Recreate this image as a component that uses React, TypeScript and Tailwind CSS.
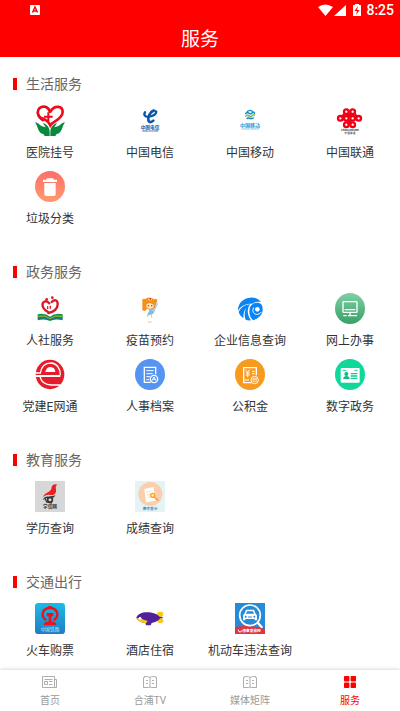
import type { ReactNode } from "react";
import clsx from "clsx";

interface Service {
  name: string;
  icon: ReactNode;
}

interface Section {
  title: string;
  items: Service[];
}

const Icon = ({ children }: { children: ReactNode }) => (
  <svg viewBox="0 0 90 93" className="h-[31px] w-[30px]" aria-hidden="true">
    {children}
  </svg>
);

const Tiny = ({ y, size, fill, weight = 700, children }: { y: number; size: number; fill: string; weight?: number; children: string }) => (
  <text x="45" y={y} textAnchor="middle" fontSize={size} fill={fill} fontWeight={weight} fontFamily="'Noto Sans CJK SC', sans-serif">
    {children}
  </text>
);

const HospitalIcon = () => (
  <Icon>
    <path d="M45 20C39 4 24 1 14 9C3 20 9 36 24 45" fill="none" stroke="#e60b1c" strokeWidth="8" strokeLinecap="round" />
    <path d="M20 39C31 43 41 50 46 61C53 49 82 44 83 21C83 2 59-1 46 20" fill="none" stroke="#f00d1a" strokeWidth="8" strokeLinecap="round" />
    <path d="M37 22H43V32H53V38H43V48H37V38H27V32H37Z" fill="#e60b1c" />
    <path d="M0 52C9 52 14 61 21 64L32 67L24 54C36 57 44 68 44 80V93H29L25 87C8 85 10 65 0 52Z" fill="#078a3c" />
    <path d="M90 52C81 52 76 61 69 64L58 67L66 54C54 57 46 68 46 80V93H61L65 87C82 85 80 65 90 52Z" fill="#078a3c" />
  </Icon>
);

const TelecomIcon = () => (
  <Icon>
    <path d="M30 22C25 30 31 37 42 35C55 33 63 28 64 20" fill="none" stroke="#0b58a8" strokeWidth="7" strokeLinecap="round" />
    <path d="M55 17C46 21 38 35 40 45C42 54 50 52 55 47" fill="none" stroke="#0b58a8" strokeWidth="8" strokeLinecap="round" />
    <path d="M49 20Q59 13 62 20" fill="none" stroke="#0b58a8" strokeWidth="6" strokeLinecap="round" />
    <Tiny y={73} size={14} fill="#0b58a8">中国电信</Tiny>
    <Tiny y={81} size={6} fill="#0b58a8">CHINA TELECOM</Tiny>
  </Icon>
);

const MobileIcon = () => (
  <Icon>
    <circle cx="45" cy="30" r="15" fill="#d8f0f5" />
    <path d="M31 27C39 15 43 32 50 25S58 22 59 27" fill="none" stroke="#1689cf" strokeWidth="4" />
    <path d="M31 35C39 23 43 40 50 33S58 29 59 32" fill="none" stroke="#80bd38" strokeWidth="4" />
    <path d="M35 41C43 34 47 46 56 38M36 20Q45 12 54 20" fill="none" stroke="#1689cf" strokeWidth="4" />
    <Tiny y={65} size={15} fill="#2d9bd6">中国移动</Tiny>
    <Tiny y={76} size={9} fill="#5bb5e2" weight={400}>China Mobile</Tiny>
  </Icon>
);

const UnicomIcon = () => (
  <Icon>
    <g fill="none" stroke="#f00014" strokeWidth="7">
      <circle cx="34" cy="20" r="7" />
      <circle cx="53" cy="20" r="7" />
      <circle cx="16" cy="40" r="7" />
      <circle cx="34" cy="40" r="7" />
      <circle cx="53" cy="40" r="7" />
      <circle cx="71" cy="40" r="7" />
      <circle cx="34" cy="59" r="7" />
      <circle cx="53" cy="59" r="7" />
      <path d="M38 25L49 35M49 25L38 35M38 45L49 54M49 45L38 54M21 35L28 27M66 35L59 27" />
    </g>
    <Tiny y={78} size={8} fill="#222">China unicom</Tiny>
    <Tiny y={87} size={7} fill="#333">中 国 联 通</Tiny>
  </Icon>
);

const TrashIcon = () => (
  <Icon>
    <defs>
      <linearGradient id="trashFill" x1="0" y1="0" x2="0" y2="1">
        <stop stopColor="#ff6e6c" />
        <stop offset="1" stopColor="#ff9b6b" />
      </linearGradient>
    </defs>
    <ellipse cx="45" cy="46.500" rx="45" ry="46.500" fill="url(#trashFill)" />
    <path d="M36 22H54L57 26H66V33H24V26H33Z" fill="#fff" />
    <path d="M28 36H62V70Q62 75 57 75H33Q28 75 28 70Z" fill="#fff" />
  </Icon>
);

const SocialIcon = () => (
  <Icon>
    <circle cx="52" cy="14" r="4" fill="#d71a28" />
    <circle cx="35" cy="19" r="4" fill="#d71a28" />
    <path d="M43 31C34 19 20 26 23 39Q25 49 39 57M50 27C60 17 69 22 68 35C67 48 55 57 40 60" fill="none" stroke="#d71a28" strokeWidth="7" strokeLinecap="round" />
    <path d="M38 40V48M46 38V47" fill="none" stroke="#d71a28" strokeWidth="4" />
    <path d="M8 64Q30 59 45 71Q60 59 83 64V82Q60 76 45 84Q30 76 8 82Z" fill="#129345" />
    <path d="M10 70Q30 65 45 77Q60 65 81 70" fill="none" stroke="#f3cc35" strokeWidth="2" />
    <path d="M10 76Q30 70 45 80Q60 70 81 76" fill="none" stroke="#2a61ad" strokeWidth="3" />
  </Icon>
);

const VaccineIcon = () => (
  <Icon>
    <path d="M51 37L68 30L64 40L55 62L44 66L35 70L40 58Z" fill="#84bce9" />
    <path d="M64 27L69 33L58 57L52 53Z" fill="#a6d3f1" />
    <path d="M22 51L22 25Q20 15 31 18Q45 9 57 19Q67 14 67 25L62 32L59 45L43 50L36 47Q30 58 22 51Z" fill="#f5901a" />
    <ellipse cx="45" cy="38" rx="11" ry="9" fill="#ffe2c2" />
    <path d="M31 34Q38 22 52 27L58 36L45 30Z" fill="#f5901a" />
    <path d="M40 17L51 17L50 22L41 22Z" fill="#fff" />
    <path d="M43 18H49M46 15V21" stroke="#e83c35" strokeWidth="3" />
    <circle cx="40" cy="38" r="2" fill="#694222" />
    <circle cx="50" cy="38" r="2" fill="#694222" />
    <path d="M39 62L37 71M49 63L50 74" stroke="#f0bd91" strokeWidth="3" />
    <ellipse cx="44" cy="87" rx="6" ry="3" fill="#fbd9c1" />
  </Icon>
);

const CompanyIcon = () => (
  <Icon>
    <path d="M9 53C8 30 26 15 46 14C59 13 71 18 78 27C68 25 59 26 51 32C30 32 17 39 9 53Z" fill="#0b84f6" />
    <path d="M11 57C18 42 30 35 46 34C35 46 36 66 48 82C43 83 37 82 32 80C27 68 29 54 34 45C28 51 25 60 25 75C17 70 13 65 11 57Z" fill="#0b84f6" />
    <path d="M45 43C50 29 68 25 78 33C83 39 84 48 82 58C78 69 69 78 54 82C45 73 40 59 45 43Z" fill="#0b84f6" />
    <path d="M56 44C50 55 57 66 68 64Q75 63 79 57" fill="none" stroke="#fff" strokeWidth="3" />
    <circle cx="67" cy="49" r="7" fill="#fff" />
  </Icon>
);

const OnlineIcon = () => (
  <Icon>
    <defs>
      <linearGradient id="onlineFill" x1="0" y1="0" x2="0" y2="1">
        <stop stopColor="#7ed0a4" />
        <stop offset="1" stopColor="#38a066" />
      </linearGradient>
    </defs>
    <ellipse cx="45" cy="46.500" rx="45" ry="46.500" fill="url(#onlineFill)" />
    <rect x="24" y="26" width="42" height="32" rx="2" fill="none" stroke="#fff" strokeWidth="4" />
    <path d="M29 50H61M45 58V68M25 68H35M39 68H66" stroke="#fff" strokeWidth="4" />
  </Icon>
);

const PartyIcon = () => (
  <Icon>
    <ellipse cx="45" cy="46.500" rx="43" ry="44" fill="#e51d2b" />
    <path d="M0 42H16C19 22 32 12 48 12C65 13 76 27 76 48" fill="none" stroke="#fff" strokeWidth="4" />
    <path d="M31 39C33 28 40 24 47 24C56 25 61 31 61 39Z" fill="#fff" />
    <path d="M0 51H76" stroke="#fff" strokeWidth="6" />
    <path d="M15 53C19 69 32 78 49 78H76" fill="none" stroke="#fff" strokeWidth="4" />
  </Icon>
);

const ArchiveIcon = () => (
  <Icon>
    <ellipse cx="45" cy="46.500" rx="45" ry="46.500" fill="#5694f2" />
    <path d="M62 46V25H28V70H47" fill="none" stroke="#fff" strokeWidth="4" />
    <path d="M34 35H56M34 44H53M34 53H45M34 62H42" stroke="#fff" strokeWidth="3" />
    <circle cx="57" cy="60" r="11" fill="#5694f2" stroke="#fff" strokeWidth="4" />
    <path d="M51 65L57 54L63 65M55 61H61" fill="none" stroke="#fff" strokeWidth="3" />
  </Icon>
);

const FundIcon = () => (
  <Icon>
    <ellipse cx="45" cy="46.500" rx="45" ry="46.500" fill="#f79a1e" />
    <path d="M64 49V26H26V71H50" fill="none" stroke="#fff" strokeWidth="4" />
    <path d="M32 32L38 40L44 32M38 40V54M32 42H44M32 48H44M51 37H59M51 44H59M29 63H42" fill="none" stroke="#fff" strokeWidth="3" />
    <circle cx="59" cy="63" r="11" fill="#f79a1e" stroke="#fff" strokeWidth="3" />
    <path d="M54 58H64V67H54ZM54 62H64" fill="none" stroke="#fff" strokeWidth="2" />
  </Icon>
);

const DigitalIcon = () => (
  <Icon>
    <ellipse cx="45" cy="46.500" rx="45" ry="46.500" fill="#10d89b" />
    <rect x="17" y="27" width="57" height="44" rx="3" fill="#fff" />
    <path d="M23 34H34M58 34H68" stroke="#10d89b" strokeWidth="3" />
    <circle cx="34" cy="45" r="6" fill="#10b985" />
    <path d="M24 60Q26 51 34 51Q43 51 44 60Z" fill="#10b985" />
    <path d="M47 44H67M47 51H67M47 58H67" stroke="#10c890" strokeWidth="4" />
  </Icon>
);

const DegreeIcon = () => (
  <Icon>
    <rect width="90" height="93" fill="#d7d7d7" />
    <path d="M24 48C30 31 50 36 50 17Q55 7 67 11Q60 15 63 24C65 37 58 44 46 42Q34 40 24 48Z" fill="#ee1c23" />
    <path d="M23 57Q29 45 42 47L62 43L55 50Q34 47 23 57Z" fill="#333" />
    <circle cx="45" cy="56" r="7" fill="none" stroke="#333" strokeWidth="5" />
    <path d="M30 52L35 63L51 66" fill="none" stroke="#333" strokeWidth="4" />
    <Tiny y={81} size={14} fill="#333">学信网</Tiny>
  </Icon>
);

const ScoreIcon = () => (
  <Icon>
    <rect width="90" height="93" fill="#e4f3f3" />
    <circle cx="46" cy="39" r="36" fill="#fbcfae" />
    <path d="M28 24L55 18L62 59L33 64Z" fill="#fff" />
    <path d="M34 34L49 31M36 42L47 40M38 50L48 48" stroke="#f5dfcf" strokeWidth="3" />
    <circle cx="53" cy="43" r="6" fill="#fff2b4" stroke="#f5a51e" strokeWidth="4" />
    <path d="M58 49L69 58" stroke="#ed9b35" strokeWidth="4" strokeLinecap="round" />
    <Tiny y={88} size={11} fill="#4b8fc2">高考查分</Tiny>
  </Icon>
);

const TrainIcon = () => (
  <Icon>
    <defs>
      <linearGradient id="trainFill" x1="0" y1="0" x2="0" y2="1">
        <stop stopColor="#1abbe8" />
        <stop offset="1" stopColor="#217cc4" />
      </linearGradient>
    </defs>
    <rect width="90" height="93" rx="10" fill="url(#trainFill)" />
    <path d="M34 52C15 40 22 15 45 15S75 40 56 52" fill="none" stroke="#ef1018" strokeWidth="7" />
    <path d="M40 9H50V16H40ZM35 30H55V38L49 41V55L63 60V66H27V60L41 55V41L35 38Z" fill="#ef1018" />
    <Tiny y={85} size={14} fill="#c9eaff" weight={400}>中国铁路</Tiny>
  </Icon>
);

const HotelIcon = () => (
  <Icon>
    <path d="M61 38L69 27L83 26L85 36L78 44L86 52L81 61L70 59L61 48Z" fill="#f8c917" />
    <path d="M4 45C8 23 58 21 77 44C71 54 61 57 50 60L47 67H33L31 60C17 59 8 53 4 45Z" fill="#51209b" />
    <path d="M5 46Q16 42 26 50L38 54L33 61Q11 59 5 46Z" fill="#f8c917" />
    <circle cx="15" cy="46" r="4" fill="#fff" />
    <path d="M63 43L83 44" stroke="#51209b" strokeWidth="4" />
  </Icon>
);

const TrafficIcon = () => (
  <Icon>
    <rect width="90" height="93" fill="#268bd7" />
    <path d="M0 72Q45 64 90 78V93H0Z" fill="#e33244" />
    <path d="M66 57L80 72" stroke="#fff" strokeWidth="7" strokeLinecap="round" />
    <circle cx="45" cy="37" r="31" fill="#268bd7" stroke="#fff" strokeWidth="5" />
    <path d="M33 20H57L62 32Q66 34 66 40V52H59V48H31V52H24V40Q24 34 28 32Z" fill="#fff" />
    <path d="M36 25H54L57 32H33Z" fill="#268bd7" />
    <circle cx="32" cy="41" r="3" fill="#268bd7" />
    <circle cx="58" cy="41" r="3" fill="#268bd7" />
    <path d="M39 42H51" stroke="#268bd7" strokeWidth="3" />
    <path d="M10 80Q10 87 15 87T20 82" fill="none" stroke="#fff" strokeWidth="3" />
    <text x="22" y="88" fontSize="11" fontWeight="700" fill="#fff" fontFamily="'Noto Sans CJK SC', sans-serif">违章查询网</text>
  </Icon>
);

const sections: Section[] = [
  {
    title: "生活服务",
    items: [
      { name: "医院挂号", icon: <HospitalIcon /> },
      { name: "中国电信", icon: <TelecomIcon /> },
      { name: "中国移动", icon: <MobileIcon /> },
      { name: "中国联通", icon: <UnicomIcon /> },
      { name: "垃圾分类", icon: <TrashIcon /> },
    ],
  },
  {
    title: "政务服务",
    items: [
      { name: "人社服务", icon: <SocialIcon /> },
      { name: "疫苗预约", icon: <VaccineIcon /> },
      { name: "企业信息查询", icon: <CompanyIcon /> },
      { name: "网上办事", icon: <OnlineIcon /> },
      { name: "党建E网通", icon: <PartyIcon /> },
      { name: "人事档案", icon: <ArchiveIcon /> },
      { name: "公积金", icon: <FundIcon /> },
      { name: "数字政务", icon: <DigitalIcon /> },
    ],
  },
  {
    title: "教育服务",
    items: [
      { name: "学历查询", icon: <DegreeIcon /> },
      { name: "成绩查询", icon: <ScoreIcon /> },
    ],
  },
  {
    title: "交通出行",
    items: [
      { name: "火车购票", icon: <TrainIcon /> },
      { name: "酒店住宿", icon: <HotelIcon /> },
      { name: "机动车违法查询", icon: <TrafficIcon /> },
    ],
  },
];

const NewsIcon = () => (
  <svg viewBox="0 0 16 12" className="h-3 w-4" fill="none" stroke="currentColor" aria-hidden="true">
    <path d="M.5 .5H12.500V11.500H.5ZM12.500 3.500H14.500V11.500H12.500M2.500 3.500H10.500M2.500 5.500H5.500V8.500H2.500ZM7 5.500H10.500M7 8.500H10.500" strokeWidth=".8" />
  </svg>
);

const BookIcon = () => (
  <svg viewBox="0 0 16 12" className="h-3 w-4" fill="none" stroke="currentColor" aria-hidden="true">
    <path d="M8 1.500Q6.500 .5 4.500 .5H2.500V1.500H1.500V11.500H6.500L8 11L9.500 11.500H14.500V1.500H13.500V.5H11.500Q9.500 .5 8 1.500ZM8 1.500V11M4 4.500H6M4 7.500H6M10 4.500H12M10 7.500H12" strokeWidth=".8" />
  </svg>
);

const GridIcon = () => (
  <svg viewBox="0 0 12 12" className="size-3" fill="currentColor" aria-hidden="true">
    <rect width="5.400" height="5.400" rx=".8" />
    <rect x="6.600" width="5.400" height="5.400" rx=".8" />
    <rect y="6.600" width="5.400" height="5.400" rx=".8" />
    <rect x="6.600" y="6.600" width="5.400" height="5.400" rx=".8" />
  </svg>
);

const tabs = [
  { name: "首页", icon: <NewsIcon /> },
  { name: "合浦TV", icon: <BookIcon /> },
  { name: "媒体矩阵", icon: <BookIcon /> },
  { name: "服务", icon: <GridIcon />, active: true },
];

function StatusBar() {
  return (
    <div className="flex h-5 items-center justify-between pr-[6px] pl-[30px]">
      <svg viewBox="0 0 10 10" className="size-[10px]" aria-hidden="true">
        <rect width="10" height="10" rx="1" fill="#fff" />
        <path d="M2.500 7.500L5 2L7.500 7.500M3.500 6H6.500" fill="none" stroke="#f00" strokeWidth="1.400" />
      </svg>
      <div className="flex items-center">
        <svg viewBox="0 0 44 14" className="h-[14px] w-11" fill="#fff" aria-hidden="true">
          <path d="M0 4Q7-1 15 4L7.500 13Z" />
          <path d="M28 2V13H16Z" />
          <path d="M35 2H37V1H41V2H43V13H35Z" />
          <path d="M40 3L36.500 8H39L38 12L41.500 7H39Z" fill="#f00" />
        </svg>
        <span className="ml-1 font-['Roboto',sans-serif] text-[14px] leading-5 font-medium">8:25</span>
      </div>
    </div>
  );
}

export default function App() {
  return (
    <div className="flex min-h-screen flex-col bg-white font-['Roboto','Noto_Sans_CJK_SC',sans-serif] text-[#333]">
      <header className="bg-[#ff0000] text-white">
        <StatusBar />
        <h1 className="pt-[3px] text-center text-[19px] leading-[34px]">服务</h1>
      </header>

      <main className="flex-1">
        {sections.map((section) => (
          <section key={section.title} className="pt-[15px] pb-[18px] first:pt-4 last:pb-0">
            <h2 className="mb-[10px] flex items-center gap-[9px] pl-[13px] text-[14px] leading-[22px] text-[#666]">
              <span className="h-3 w-1 bg-[#ff0000]" />
              {section.title}
            </h2>
            <div className="grid grid-cols-4 gap-y-[9px]">
              {section.items.map((item) => (
                <button key={item.name} type="button" className="flex flex-col items-center gap-2">
                  {item.icon}
                  <span className="text-[12px] leading-[18px] whitespace-nowrap">{item.name}</span>
                </button>
              ))}
            </div>
          </section>
        ))}
      </main>

      <nav className="sticky bottom-0 grid grid-cols-4 bg-white pt-[6px] pb-[2px] shadow-[0_-1px_3px_rgba(0,0,0,0.15)]">
        {tabs.map((tab) => (
          <a
            key={tab.name}
            href="#"
            className={clsx("flex flex-col items-center gap-[5px]", tab.active ? "text-[#ff0000]" : "text-[#999]")}
          >
            {tab.icon}
            <span className="text-[10px] leading-4">{tab.name}</span>
          </a>
        ))}
      </nav>
    </div>
  );
}
